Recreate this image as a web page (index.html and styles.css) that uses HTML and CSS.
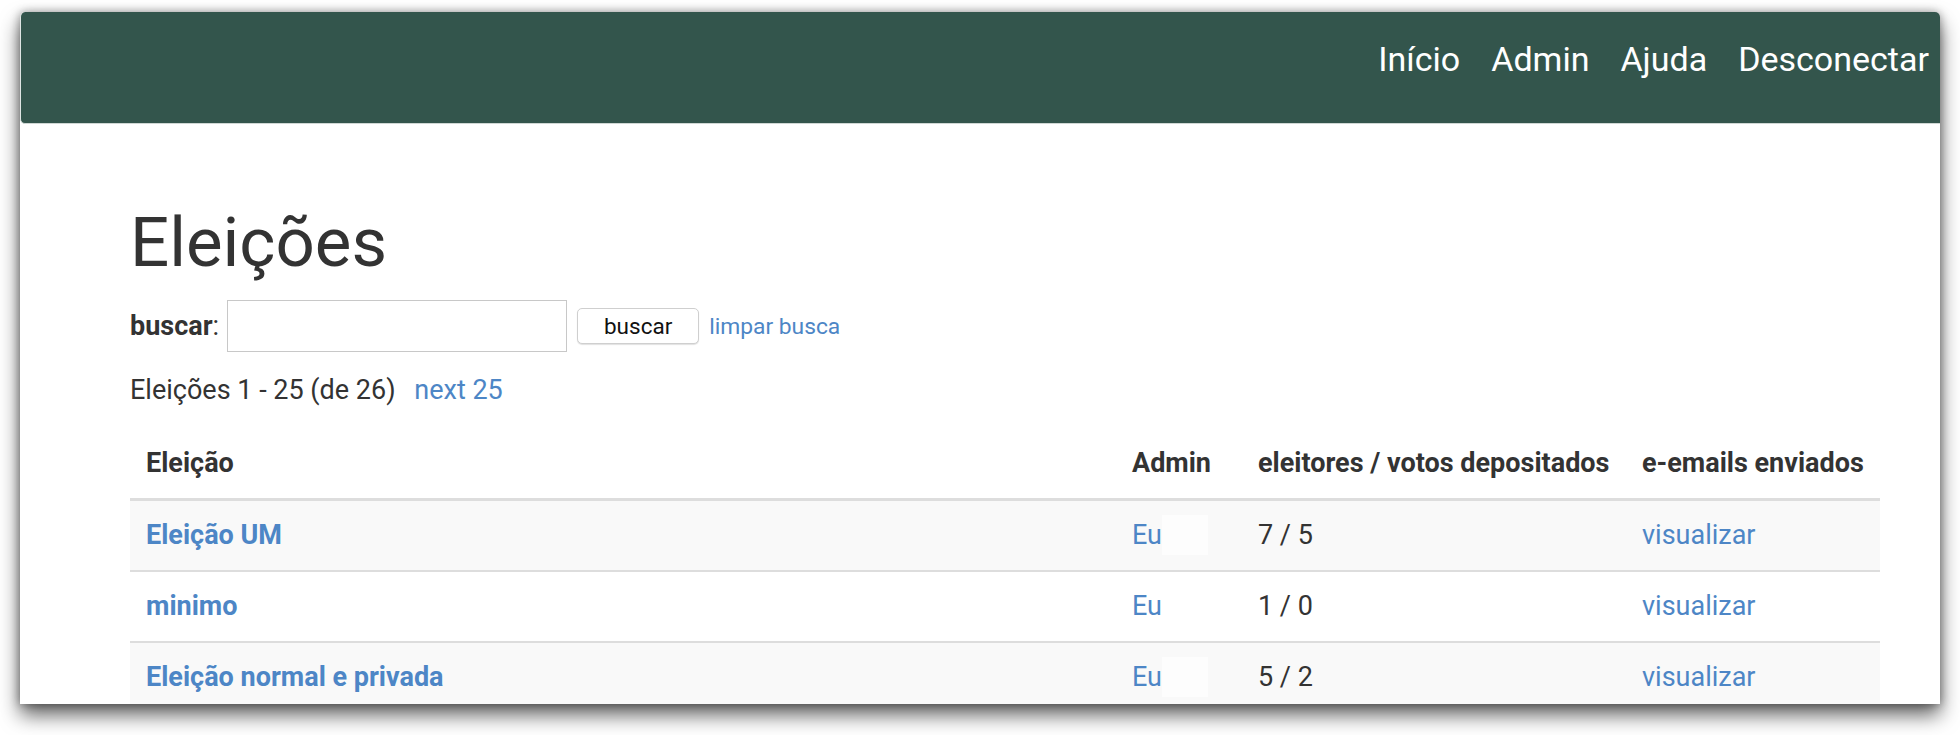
FILE: index.html
```html
<!DOCTYPE html>
<html lang="pt">
<head>
<meta charset="utf-8">
<title>Eleições</title>
<link rel="stylesheet" href="styles.css">
</head>
<body>
<div class="window">
  <nav class="navbar">
    <ul class="nav">
      <li><a href="#">Início</a></li>
      <li><a href="#">Admin</a></li>
      <li><a href="#">Ajuda</a></li>
      <li><a href="#">Desconectar</a></li>
    </ul>
  </nav>
  <main class="content">
    <h1 class="title">Eleições</h1>
    <form class="search">
      <label class="search-label"><b>buscar</b>:</label>
      <input class="search-input" type="text">
      <button class="search-btn" type="button">buscar</button>
      <a class="search-clear" href="#">limpar busca</a>
    </form>
    <p class="pager">Eleições 1 - 25 (de 26) <a class="pager-next" href="#">next 25</a></p>
    <table class="elections">
      <colgroup>
        <col class="c-name">
        <col class="c-admin">
        <col class="c-count">
        <col class="c-mail">
      </colgroup>
      <thead>
        <tr>
          <th>Eleição</th>
          <th>Admin</th>
          <th>eleitores / votos depositados</th>
          <th>e-emails enviados</th>
        </tr>
      </thead>
      <tbody>
        <tr class="odd">
          <td><a class="e-name" href="#">Eleição UM</a></td>
          <td><a href="#">Eu</a><span class="blank"></span></td>
          <td>7 / 5</td>
          <td><a href="#">visualizar</a></td>
        </tr>
        <tr>
          <td><a class="e-name" href="#">minimo</a></td>
          <td><a href="#">Eu</a><span class="blank"></span></td>
          <td>1 / 0</td>
          <td><a href="#">visualizar</a></td>
        </tr>
        <tr class="odd">
          <td><a class="e-name" href="#">Eleição normal e privada</a></td>
          <td><a href="#">Eu</a><span class="blank"></span></td>
          <td>5 / 2</td>
          <td><a href="#">visualizar</a></td>
        </tr>
      </tbody>
    </table>
  </main>
</div>
</body>
</html>
```

FILE: styles.css
```css
html, body {
  margin: 0;
  padding: 0;
  background: #ffffff;
}

body {
  box-sizing: border-box;
  min-height: 735px;
  padding: 12px 20px 0 20px;
  font-family: "Roboto", "Liberation Sans", sans-serif;
  color: #333333;
}

.window {
  width: 1920px;
  height: 692px;
  background: #ffffff;
  border-radius: 5px 5px 0 0;
  overflow: hidden;
  box-shadow: 0 11px 20px rgba(0, 0, 0, 0.62), 0 0 10px rgba(0, 0, 0, 0.36);
}

.navbar {
  box-sizing: border-box;
  height: 112px;
  background: #33554c;
  border-left: 1px solid #dfe5e3;
  border-bottom: 1px solid #cfd7d4;
  border-radius: 5px 0 0 5px;
  display: flex;
  justify-content: flex-end;
  align-items: flex-start;
  padding: 27px 11px 0 0;
}

.nav {
  list-style: none;
  margin: 0;
  padding: 0;
  display: flex;
  gap: 31px;
}

.nav a {
  color: #ffffff;
  text-decoration: none;
  font-size: 34px;
  line-height: 40px;
}

.content {
  padding: 0 60px 0 110px;
}

.title {
  margin: 80px 0 19px 0;
  font-size: 69px;
  line-height: 77px;
  font-weight: 400;
  color: #333333;
}

.search {
  display: flex;
  align-items: center;
  height: 52px;
  margin: 0;
}

.search-label {
  font-size: 27px;
  line-height: 37px;
  color: #333333;
  margin-right: 8px;
}

.search-input {
  box-sizing: border-box;
  width: 340px;
  height: 52px;
  border: 1px solid #c8c8c8;
  border-radius: 0;
  margin: 0 10px 0 0;
  padding: 0 6px;
  background: #ffffff;
  font-family: inherit;
  font-size: 22px;
}

.search-btn {
  box-sizing: border-box;
  width: 122px;
  height: 36px;
  margin: 0 10px 0 0;
  padding: 0;
  background: #ffffff;
  border: 1px solid #cfcfcf;
  border-radius: 5px;
  box-shadow: 0 1px 1px rgba(0, 0, 0, 0.12);
  font-family: inherit;
  font-size: 22.5px;
  color: #111111;
}

.search-clear {
  font-size: 22.8px;
  color: #4d86c6;
  text-decoration: none;
}

.pager {
  margin: 20px 0 0 0;
  font-size: 27px;
  line-height: 37px;
}

.pager-next {
  margin-left: 12px;
  color: #4d86c6;
  text-decoration: none;
}

.elections {
  width: 1750px;
  margin-top: 20px;
  border-collapse: collapse;
  table-layout: fixed;
  font-size: 27px;
  line-height: 37px;
}

.c-admin { width: 126px; }
.c-count { width: 384px; }
.c-mail { width: 254px; }

.elections th {
  text-align: left;
  font-weight: 700;
  color: #333333;
  padding: 16px 16px;
  border-bottom: 3px solid #dddddd;
  white-space: nowrap;
}

.elections td {
  padding: 16px 16px;
  border-bottom: 2px solid #dddddd;
  white-space: nowrap;
}

.elections tr.odd td {
  background: #f9f9f9;
}

.elections a {
  color: #4d86c6;
  text-decoration: none;
}

.elections a.e-name {
  font-weight: 700;
}

.blank {
  display: inline-block;
  vertical-align: top;
  width: 46px;
  height: 40px;
  margin: -2px 0;
  background: rgba(255, 255, 255, 0.6);
}
```
